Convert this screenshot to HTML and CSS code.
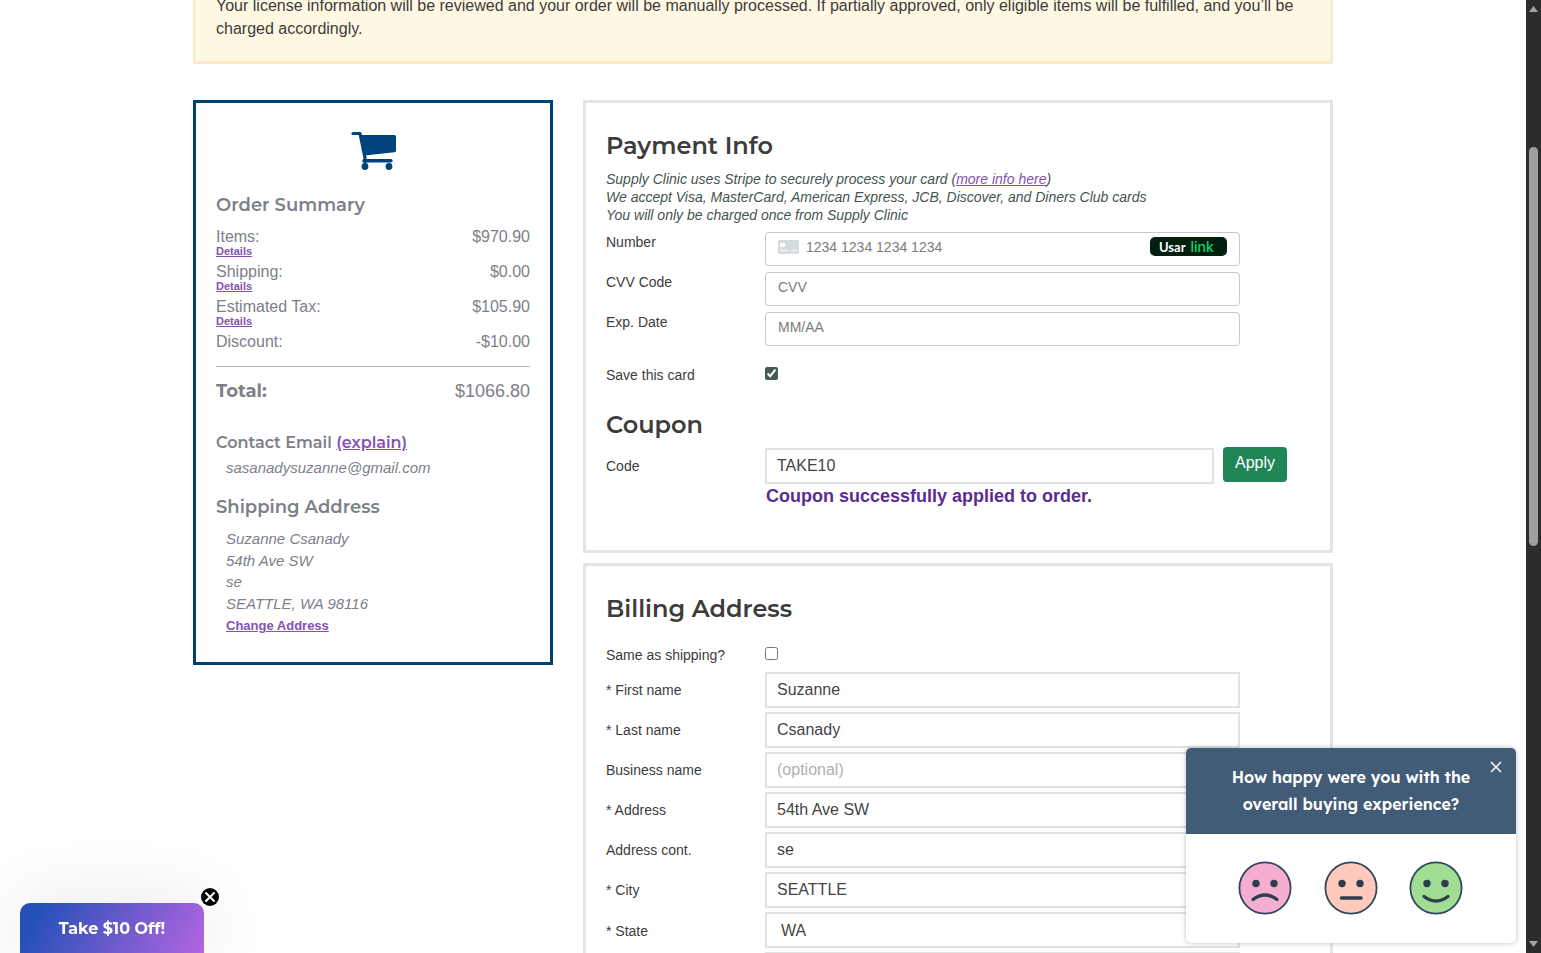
FILE: index.html
```html
<!DOCTYPE html>
<html lang="en">
<head>
  <meta charset="UTF-8" />
  <meta name="viewport" content="width=device-width, initial-scale=1.0"/>
  <title>Supply Clinic - Checkout</title>
  <link rel="stylesheet" href="styles.css">
</head>
<body>

<div class="page">
  <div class="alert">Your license information will be reviewed and your order will be manually processed. If partially approved, only eligible items will be fulfilled, and you’ll be<br>charged accordingly.</div>

  <div class="columns">
    <!-- Order summary -->
    <div class="summary">
      <svg class="cart" viewBox="0 0 46 40" width="46" height="40">
        <path d="M2 2.500H9L14 27V31" fill="none" stroke="#00437c" stroke-width="3.200" stroke-linecap="round" stroke-linejoin="round"/>
        <path d="M9 4H43.5Q45 4 45 5.500V19.500Q45 21 43.500 21.200L13.500 24.500Z" fill="#00437c"/>
        <path d="M13 29.800H40" stroke="#00437c" stroke-width="3.400" stroke-linecap="round"/>
        <circle cx="14" cy="35.500" r="3.400" fill="#00437c"/>
        <circle cx="38" cy="35.500" r="3.400" fill="#00437c"/>
      </svg>
      <h3 class="side-title order-title">Order Summary</h3>
      <div class="line"><div>Items:<a class="details" href="#">Details</a></div><span>$970.90</span></div>
      <div class="line"><div>Shipping:<a class="details" href="#">Details</a></div><span>$0.00</span></div>
      <div class="line"><div>Estimated Tax:<a class="details" href="#">Details</a></div><span>$105.90</span></div>
      <div class="line"><div>Discount:</div><span>-$10.00</span></div>
      <div class="total"><b>Total:</b><span>$1066.80</span></div>
      <h4 class="contact-title">Contact Email <a href="#">(explain)</a></h4>
      <div class="email">sasanadysuzanne@gmail.com</div>
      <h3 class="side-title ship-title">Shipping Address</h3>
      <div class="address">
        Suzanne Csanady<br>54th Ave SW<br>se<br>SEATTLE, WA 98116<br>
        <a href="#">Change Address</a>
      </div>
    </div>

    <div class="main">
      <div class="card payment">
        <h2>Payment Info</h2>
        <div class="notes">
          Supply Clinic uses Stripe to securely process your card (<a href="#">more info here</a>)<br>
          We accept Visa, MasterCard, American Express, JCB, Discover, and Diners Club cards<br>
          You will only be charged once from Supply Clinic
        </div>
        <div class="row">
          <label>Number</label>
          <div class="stripe">
            <svg class="card-icon" viewBox="0 0 21 14" width="21" height="14">
              <rect width="21" height="14" rx="1" fill="#d5dce0"/>
              <rect x="2" y="3" width="5" height="4" rx="1" fill="#fff"/>
              <path d="M2 10.500H10M13 10.500H19" stroke="#eef1f3" stroke-width="1.500"/>
            </svg>
            <span>1234 1234 1234 1234</span>
            <div class="link-badge">Usar <b>link</b></div>
          </div>
        </div>
        <div class="row"><label>CVV Code</label><div class="stripe">CVV</div></div>
        <div class="row"><label>Exp. Date</label><div class="stripe">MM/AA</div></div>
        <div class="row save"><label>Save this card</label><input type="checkbox" checked></div>
        <h2>Coupon</h2>
        <div class="row coupon">
          <label>Code</label>
          <input class="field" type="text" value="TAKE10">
          <button class="apply">Apply</button>
        </div>
        <div class="success">Coupon successfully applied to order.</div>
      </div>

      <div class="card billing">
        <h2>Billing Address</h2>
        <div class="row same"><label>Same as shipping?</label><input type="checkbox"></div>
        <div class="row bill"><label>* First name</label><input class="field" type="text" value="Suzanne"></div>
        <div class="row bill"><label>* Last name</label><input class="field" type="text" value="Csanady"></div>
        <div class="row bill"><label>Business name</label><input class="field" type="text" placeholder="(optional)"></div>
        <div class="row bill"><label>* Address</label><input class="field" type="text" value="54th Ave SW"></div>
        <div class="row bill"><label>Address cont.</label><input class="field" type="text" value="se"></div>
        <div class="row bill"><label>* City</label><input class="field" type="text" value="SEATTLE"></div>
        <div class="row bill state"><label>* State</label><input class="field" type="text" value="WA"></div>
        <div class="row bill"><label></label><input class="field" type="text"></div>
      </div>
    </div>
  </div>
</div>

<div class="scrollbar">
  <svg viewBox="0 0 9 6" width="9" height="6"><path d="M4.500 0L9 6H0Z" fill="#a3a3a3"/></svg>
  <div class="thumb"></div>
  <svg class="down" viewBox="0 0 9 6" width="9" height="6"><path d="M4.500 6L9 0H0Z" fill="#a3a3a3"/></svg>
</div>

<!-- Feedback survey -->
<div class="survey">
  <div class="survey-head">
    <span>How happy were you with the</span>
    <span>overall buying experience?</span>
    <svg class="survey-close" viewBox="0 0 12 12" width="12" height="12"><path d="M1 1L11 11M11 1L1 11" stroke="#fff" stroke-width="1.500"/></svg>
  </div>
  <div class="faces">
    <svg viewBox="0 0 54 54" width="54" height="54">
      <circle cx="27" cy="27" r="25.600" fill="#f5aed0" stroke="#33475b" stroke-width="1.800"/>
      <circle cx="18" cy="22.500" r="3.700" fill="#2d3e50"/><circle cx="36" cy="22.500" r="3.700" fill="#2d3e50"/>
      <path d="M15 38.500Q27 29.500 39 38.500" fill="none" stroke="#2d3e50" stroke-width="3.200" stroke-linecap="round"/>
    </svg>
    <svg viewBox="0 0 54 54" width="54" height="54">
      <circle cx="27" cy="27" r="25.600" fill="#ffc9bc" stroke="#33475b" stroke-width="1.800"/>
      <circle cx="18" cy="22.500" r="3.700" fill="#2d3e50"/><circle cx="36" cy="22.500" r="3.700" fill="#2d3e50"/>
      <path d="M17.500 37H37" fill="none" stroke="#2d3e50" stroke-width="3.600" stroke-linecap="round"/>
    </svg>
    <svg viewBox="0 0 54 54" width="54" height="54">
      <circle cx="27" cy="27" r="25.600" fill="#a2dd94" stroke="#33475b" stroke-width="1.800"/>
      <circle cx="18" cy="22.500" r="3.700" fill="#2d3e50"/><circle cx="36" cy="22.500" r="3.700" fill="#2d3e50"/>
      <path d="M15 35.500Q27 44.500 39 35.500" fill="none" stroke="#2d3e50" stroke-width="3.200" stroke-linecap="round"/>
    </svg>
  </div>
</div>

<!-- Promo teaser -->
<div class="promo">
  <span>Take $10 Off!</span>
  <svg class="promo-close" viewBox="0 0 18 18" width="18" height="18">
    <circle cx="9" cy="9" r="9" fill="#000"/>
    <path d="M5 5L13 13M13 5L5 13" stroke="#fff" stroke-width="2" stroke-linecap="round"/>
  </svg>
</div>

</body>
</html>
```
FILE: styles.css
```css
* { box-sizing: border-box; margin: 0; padding: 0; }
body {
  display: flex;
  height: 100vh;
  overflow: hidden;
  font-family: "Liberation Sans", Arial, sans-serif;
  font-size: 16px;
  color: #3c3c3c;
  background: #fff;
}
.page {
  flex: 1;
  height: 953px;
  overflow: hidden;
  padding-left: 193px;
}
.alert {
  width: 1140px;
  margin-top: -6px;
  padding: 0 20px 21px;
  border: 3px solid #f8eccb;
  border-top: 0;
  background: #fff8e3;
  line-height: 23px;
  white-space: nowrap;
}
.columns {
  display: flex;
  align-items: flex-start;
  gap: 30px;
  margin-top: 36px;
}
h2, h3, h4 {
  font-family: Montserrat, Inter, sans-serif;
  font-weight: 600;
}
a { color: #8452b0; }

/* left column */
.summary {
  width: 360px;
  height: 565px;
  padding: 28px 20px 0;
  border: 3px solid #00406e;
  color: #7d8088;
}
.cart {
  display: block;
  margin: 0 auto 22px;
  position: relative;
  left: 1px;
}
.side-title { font-size: 18px; line-height: 24px; }
.order-title { margin-bottom: 10px; }
.line {
  display: flex;
  justify-content: space-between;
  height: 35px;
  line-height: 19px;
}
.details {
  display: block;
  font-size: 11px;
  font-weight: bold;
  line-height: 11px;
}
.total {
  display: flex;
  justify-content: space-between;
  margin-top: -1px;
  padding-top: 12px;
  border-top: 1px solid #b5b7bb;
  font-size: 18px;
  line-height: 24px;
}
.total b {
  font-family: Montserrat, Inter, sans-serif;
}
.contact-title {
  margin-top: 28px;
  font-size: 16px;
  line-height: 24px;
}
.email {
  margin: 3px 0 0 10px;
  font-size: 15px;
  line-height: 20px;
  font-style: italic;
}
.ship-title { margin-top: 17px; }
.address {
  margin: 9px 0 0 10px;
  font-size: 15px;
  line-height: 21.6px;
  font-style: italic;
}
.address a {
  font-size: 13px;
  font-weight: bold;
  font-style: normal;
}

/* right column */
.main {
  display: flex;
  flex-direction: column;
  gap: 10px;
  width: 750px;
}
.card {
  border: 3px solid #e4e4e4;
  padding: 27px 20px 0;
}
.payment { height: 453px; }
.billing { height: 600px; }
h2 {
  font-size: 24px;
  line-height: 32px;
}
.notes {
  margin-top: 8px;
  font-size: 14px;
  line-height: 18px;
  font-style: italic;
  color: #45544f;
  white-space: nowrap;
}
.row {
  display: flex;
  align-items: flex-start;
  height: 40px;
}
.row label {
  width: 159px;
  font-size: 14px;
  line-height: 20px;
}
.notes + .row { margin-top: 8px; }
.stripe {
  display: flex;
  align-items: center;
  width: 475px;
  height: 34px;
  padding: 0 12px 4px;
  border: 1px solid #c8c8c8;
  border-radius: 4px;
  font-size: 14px;
  color: #7c7c7c;
}
.card-icon { margin-right: 7px; }
.link-badge {
  display: flex;
  align-items: center;
  gap: 5px;
  width: 77px;
  height: 19px;
  margin: 0 0 1px auto;
  padding-left: 9px;
  border-radius: 5px;
  background: #011e0f;
  font-family: Lato, sans-serif;
  font-size: 13px;
  font-weight: bold;
  color: #fff;
}
.link-badge b {
  margin-bottom: 1px;
  font-family: Inter, sans-serif;
  font-size: 14px;
  font-weight: 500;
  color: #00d66f;
}
input[type=checkbox] {
  width: 13px;
  height: 13px;
  accent-color: #435c54;
}
.save { padding-top: 13px; height: 57px; }
.save input { margin-top: 2px; }
.coupon { margin-top: 7px; height: 36px; }
.coupon label { margin-top: 8px; }
.field {
  width: 475px;
  height: 36px;
  padding: 0 10px;
  border: 2px solid #e2e2e4;
  background: #fff;
  font: 16px "Liberation Sans", Arial, sans-serif;
  color: #444;
}
.field::placeholder { color: #b0b0b0; }
.coupon .field { width: 449px; }
.apply {
  width: 64px;
  height: 35px;
  margin: -1px 0 0 9px;
  padding-bottom: 3px;
  border: 0;
  border-radius: 4px;
  background: #208658;
  color: #fff;
  font: 16px "Liberation Sans", Arial, sans-serif;
}
.success {
  margin: 2px 0 0 160px;
  font-size: 18px;
  font-weight: bold;
  line-height: 20px;
  color: #5a2d91;
}
.same { padding-top: 20px; height: 47px; }
.same input { margin-top: 2px; }
.bill label { margin-top: 8px; }
.state label { margin-top: 9px; }
.state .field { padding: 2px 14px 0; }

.scrollbar {
  display: flex;
  flex-direction: column;
  align-items: center;
  width: 15px;
  height: 953px;
  padding: 6px 0;
  background: #2c2c2c;
}
.thumb {
  width: 9px;
  height: 399px;
  margin-top: 135px;
  border-radius: 5px;
  background: #9f9f9f;
}
.down { margin-top: auto; }

.survey {
  position: fixed;
  left: 1186px;
  top: 748px;
  width: 330px;
  height: 195px;
  border-radius: 5px;
  background: #fff;
  box-shadow: 0 0 5px rgba(45, 62, 80, .35);
}
.survey-head {
  display: flex;
  flex-direction: column;
  align-items: center;
  height: 86px;
  padding-top: 16px;
  border-radius: 5px 5px 0 0;
  background: #425b76;
  color: #fff;
  font-family: "Lexend Deca", Lato, sans-serif;
  font-size: 16px;
  font-weight: 600;
  line-height: 27px;
  white-space: nowrap;
}
.survey-close {
  position: absolute;
  right: 14px;
  top: 13px;
}
.faces {
  display: flex;
  gap: 31.500px;
  padding: 27px 0 0 52px;
}

.promo {
  position: fixed;
  left: 20px;
  top: 903px;
  width: 184px;
  height: 50px;
  border-radius: 10px 10px 0 0;
  background: linear-gradient(120deg, #2450b8 10%, #b365e0);
  box-shadow: 0 0 70px rgba(0, 0, 0, .1);
  color: #fff;
  font: 700 16px/52px Montserrat, Inter, sans-serif;
  text-align: center;
}
.promo-close {
  position: absolute;
  right: -15px;
  top: -15px;
}
```
